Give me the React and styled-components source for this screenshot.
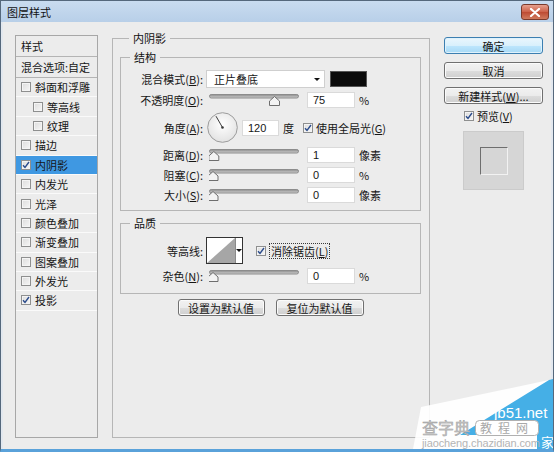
import React from "react";
import styled, { createGlobalStyle } from "styled-components";

const GlobalStyle = createGlobalStyle`
  html, body {
    margin: 0;
    padding: 0;
    background: #ececec;
  }
  body {
    font-family: "Noto Sans CJK SC", "Liberation Sans", sans-serif;
    font-size: 11px;
    color: #161616;
  }
  * {
    box-sizing: border-box;
  }
`;

// 왼쪽 스타일 목록
const styleList = [
  { label: "斜面和浮雕", checked: false },
  { label: "等高线", checked: false, sub: true },
  { label: "纹理", checked: false, sub: true },
  { label: "描边", checked: false },
  { label: "内阴影", checked: true, active: true },
  { label: "内发光", checked: false },
  { label: "光泽", checked: false },
  { label: "颜色叠加", checked: false },
  { label: "渐变叠加", checked: false },
  { label: "图案叠加", checked: false },
  { label: "外发光", checked: false },
  { label: "投影", checked: true },
];

function Check({ checked }) {
  return (
    <CheckBox>
      {checked && (
        <svg width="8" height="8" viewBox="0 0 8 8">
          <path d="M1 4.2 L3 6.5 L7 1" fill="none" stroke="#2b4c8c" strokeWidth="1.4" />
        </svg>
      )}
    </CheckBox>
  );
}

function Key({ k }) {
  return (
    <>
      (<u>{k}</u>)
    </>
  );
}

function Slider({ value }) {
  const x = 4 + (value / 100) * 82;
  return (
    <SliderWrap>
      <svg width="90" height="16" viewBox="0 0 90 16">
        <defs>
          <linearGradient id="track" x1="0" y1="0" x2="0" y2="1">
            <stop offset="0" stopColor="#8a8a8a" />
            <stop offset="1" stopColor="#d2d2d2" />
          </linearGradient>
        </defs>
        <rect x="0.5" y="2.5" width="89" height="3.5" rx="1.7" fill="url(#track)" stroke="#8c8c8c" />
        <path
          d={`M${x - 5} 13.5 L${x + 5} 13.5 L${x + 5} 9 L${x} 4.5 L${x - 5} 9 Z`}
          fill="#f3f3f3"
          stroke="#6e6e6e"
        />
      </svg>
    </SliderWrap>
  );
}

function Dial() {
  return (
    <DialWrap>
      <svg width="31" height="31" viewBox="0 0 31 31">
        <defs>
          <radialGradient id="dialg" cx="0.5" cy="0.4" r="0.6">
            <stop offset="0" stopColor="#ffffff" />
            <stop offset="1" stopColor="#e2e2e2" />
          </radialGradient>
        </defs>
        <circle cx="15.5" cy="15.5" r="14.8" fill="url(#dialg)" stroke="#9c9c9c" />
        <line x1="15.5" y1="15.5" x2="9" y2="4.2" stroke="#3a3a3a" strokeWidth="1" />
        <circle cx="15.5" cy="15.5" r="1.3" fill="#3a3a3a" />
      </svg>
    </DialWrap>
  );
}

function SliderRow({ label, value, unit }) {
  return (
    <Row>
      <Label>{label}</Label>
      <Slider value={value} />
      <NumInput>{value}</NumInput>
      <Unit>{unit}</Unit>
    </Row>
  );
}

export default function App() {
  return (
    <>
      <GlobalStyle />
      <Window>
        <TitleBar>
          <TitleText>图层样式</TitleText>
          <CloseButton>
            <svg width="12" height="9" viewBox="0 0 12 9">
              <path d="M2 1 L10 8 M10 1 L2 8" stroke="#ffffff" strokeWidth="2.2" strokeLinecap="round" />
            </svg>
          </CloseButton>
        </TitleBar>

        <Body>
          <StyleList>
            <ListHeader>样式</ListHeader>
            <ListHeader>混合选项:自定</ListHeader>
            {styleList.map((item) => (
              <ListItem key={item.label} $sub={item.sub} $active={item.active}>
                <Check checked={item.checked} />
                <span>{item.label}</span>
              </ListItem>
            ))}
          </StyleList>

          <Group $main>
            <Legend>内阴影</Legend>

            <Group>
              <Legend>结构</Legend>
              <Rows>
                <Row $h={18}>
                  <Label>
                    混合模式<Key k="B" />:
                  </Label>
                  <Select>
                    <span>正片叠底</span>
                    <Caret />
                  </Select>
                  <Swatch />
                </Row>
                <SliderRow label={<>不透明度<Key k="O" />:</>} value={75} unit="%" />
                <Row $h={31}>
                  <Label>
                    角度<Key k="A" />:
                  </Label>
                  <Dial />
                  <NumInput $w={37} $gap={4}>120</NumInput>
                  <Unit>度</Unit>
                  <CheckLabel $gap={9}>
                    <Check checked />
                    <span>
                      使用全局光<Key k="G" />
                    </span>
                  </CheckLabel>
                </Row>
                <SliderRow label={<>距离<Key k="D" />:</>} value={1} unit="像素" />
                <SliderRow label={<>阻塞<Key k="C" />:</>} value={0} unit="%" />
                <SliderRow label={<>大小<Key k="S" />:</>} value={0} unit="像素" />
              </Rows>
            </Group>

            <Group $quality>
              <Legend>品质</Legend>
              <Rows $quality>
                <Row $h={27}>
                  <Label>等高线:</Label>
                  <ContourBox>
                    <svg width="28" height="25" viewBox="0 0 28 25">
                      <rect width="28" height="25" fill="#ffffff" />
                      <polygon points="0,25 28,0 28,25" fill="#a6a6a6" />
                    </svg>
                    <ContourDrop>
                      <Caret />
                    </ContourDrop>
                  </ContourBox>
                  <CheckLabel $gap={13}>
                    <Check checked />
                    <Focus>
                      消除锯齿<Key k="L" />
                    </Focus>
                  </CheckLabel>
                </Row>
                <SliderRow label={<>杂色<Key k="N" />:</>} value={0} unit="%" />
              </Rows>
            </Group>

            <ButtonRow>
              <Button $w={87}>设置为默认值</Button>
              <Button $w={88}>复位为默认值</Button>
            </ButtonRow>
          </Group>

          <RightColumn>
            <Button $primary>确定</Button>
            <Button>取消</Button>
            <Button>
              新建样式<Key k="W" />...
            </Button>
            <PreviewToggle>
              <Check checked />
              <span>
                预览<Key k="V" />
              </span>
            </PreviewToggle>
            <PreviewBox>
              <PreviewSquare />
            </PreviewBox>
          </RightColumn>
        </Body>

        {/* 워터마크 */}
        <Watermark width="140" height="72" viewBox="0 0 140 72">
          <polygon points="8,30 136,3 140,3 140,72 0,72" fill="#ffffff" opacity="0.92" />
          <polygon points="136,3 140,2 140,72 124,72 124,58 47,58" fill="#45afe6" />
          <text x="81" y="41" fontSize="15" fill="#ffffff" fontFamily="Liberation Sans, sans-serif">
            jb51.net
          </text>
          <text x="9" y="57" fontSize="16" fill="#c4c4c4" stroke="#9a9a9a" strokeWidth="0.4" fontFamily="Noto Sans CJK SC, sans-serif">
            查字典
          </text>
          <rect x="62.5" y="43.5" width="63" height="15" rx="4" fill="#ffffff" stroke="#b0b0b0" />
          <text x="94" y="55.5" fontSize="12" fill="#a8a8a8" textAnchor="middle" letterSpacing="6" fontFamily="Noto Sans CJK SC, sans-serif">
            教程网
          </text>
          <text x="9" y="70" fontSize="11" fill="#b4b4b4" textLength="118" fontFamily="Liberation Sans, sans-serif">
            jiaocheng.chazidian.com
          </text>
          <text x="128" y="70" fontSize="13" fill="#ffffff" fontFamily="Noto Sans CJK SC, sans-serif">
            家
          </text>
        </Watermark>
      </Window>
    </>
  );
}

const Window = styled.div`
  position: relative;
  width: 554px;
  height: 452px;
  display: flex;
  flex-direction: column;
  background: #ececec;
  border: 1px solid #55687c;
  border-bottom: 3px solid #5aa2da;
  overflow: hidden;
`;

const TitleBar = styled.div`
  display: flex;
  align-items: center;
  justify-content: space-between;
  height: 21px;
  padding: 0 4px 0 6px;
  background: linear-gradient(#c9dcf0, #b8cfe8);
`;

const TitleText = styled.span`
  font-size: 11px;
  line-height: 14px;
  color: #111;
`;

const CloseButton = styled.div`
  display: flex;
  align-items: center;
  justify-content: center;
  width: 28px;
  height: 16px;
  margin-top: 1px;
  border: 1px solid #7a3a2c;
  border-radius: 3px;
  background: linear-gradient(#e6a08e, #cc6048 50%, #bd4a32 51%, #d07a5e);
`;

const Body = styled.div`
  flex: 1;
  display: flex;
  align-items: flex-start;
  padding: 9px 0 0 12px;
  border-left: 2px solid #e2e8ef;
  border-right: 2px solid #e2e8ef;
`;

const StyleList = styled.div`
  width: 83px;
  height: 403px;
  margin-top: 4px;
  border: 1px solid #a7a7a7;
  background: #ececec;
  display: flex;
  flex-direction: column;
`;

const ListHeader = styled.div`
  height: 21px;
  padding-left: 5px;
  line-height: 20px;
  border-bottom: 1px solid #b4b4b4;
  white-space: nowrap;
`;

const ListItem = styled.div`
  display: flex;
  align-items: center;
  gap: 4px;
  height: 19.4px;
  padding-left: ${(p) => (p.$sub ? 17 : 5)}px;
  border-bottom: 1px solid #fafafa;
  background: ${(p) => (p.$active ? "#3f98e2" : "transparent")};
  line-height: 14px;
  white-space: nowrap;
`;

const CheckBox = styled.span`
  display: inline-flex;
  align-items: center;
  justify-content: center;
  flex-shrink: 0;
  width: 10px;
  height: 10px;
  border: 1px solid #8e8f8f;
  background: linear-gradient(135deg, #dcdcdc, #f6f6f6);
  box-shadow: inset 0 0 0 1px #f4f4f4;
`;

const Group = styled.fieldset`
  margin: ${(p) => (p.$main ? "0 0 0 14px" : "5px 0 0 0")};
  padding: ${(p) => (p.$main ? "0 8px 0 7px" : "0")};
  width: ${(p) => (p.$main ? "318px" : "301px")};
  height: ${(p) => (p.$main ? "407px" : "auto")};
  min-width: 0;
  border: 1px solid #b6b6b6;
`;

const Legend = styled.legend`
  margin-left: 9px;
  padding: 0 4px;
  font-size: 11px;
  line-height: 14px;
  color: #111;
`;

const Rows = styled.div`
  display: flex;
  flex-direction: column;
  gap: 4px;
  padding: ${(p) => (p.$quality ? "7px 0 9px" : "6px 0 7px")};
`;

const Row = styled.div`
  display: flex;
  align-items: center;
  height: ${(p) => p.$h || 16}px;
  white-space: nowrap;
`;

const Label = styled.span`
  flex-shrink: 0;
  width: 82px;
  margin-right: 3px;
  text-align: right;
  line-height: 14px;
`;

const Select = styled.div`
  display: flex;
  align-items: center;
  justify-content: space-between;
  width: 119px;
  height: 18px;
  padding: 0 4px 0 7px;
  background: #ffffff;
  border: 1px solid #cfcfcf;
  line-height: 14px;
`;

const Caret = styled.span`
  width: 0;
  height: 0;
  border-left: 3px solid transparent;
  border-right: 3px solid transparent;
  border-top: 3px solid #111;
`;

const Swatch = styled.div`
  width: 37px;
  height: 16px;
  margin-left: 5px;
  background: #0b0b0b;
  border: 1px solid #555;
`;

const SliderWrap = styled.div`
  display: flex;
  width: 90px;
  height: 16px;
  margin-left: 3px;
`;

const DialWrap = styled.div`
  display: flex;
  width: 31px;
  height: 31px;
  margin-left: 1px;
`;

const NumInput = styled.div`
  width: ${(p) => p.$w || 48}px;
  height: 16px;
  margin-left: ${(p) => p.$gap || 8}px;
  padding-left: 5px;
  background: #ffffff;
  border: 1px solid #dadada;
  font-family: "Liberation Sans", sans-serif;
  font-size: 11px;
  line-height: 14px;
`;

const Unit = styled.span`
  margin-left: 4px;
  line-height: 14px;
`;

const CheckLabel = styled.div`
  display: flex;
  align-items: center;
  gap: 3px;
  margin-left: ${(p) => p.$gap}px;
  line-height: 14px;
`;

const Focus = styled.span`
  padding: 0 1px;
  border: 1px dotted #3a3a3a;
  line-height: 14px;
`;

const ContourBox = styled.div`
  display: flex;
  width: 37px;
  height: 27px;
  border: 1px solid #333;
  background: #ffffff;
`;

const ContourDrop = styled.div`
  flex: 1;
  display: flex;
  align-items: center;
  justify-content: center;
  border-left: 1px solid #8a8a8a;
`;

const ButtonRow = styled.div`
  display: flex;
  justify-content: center;
  gap: 11px;
  margin-top: 5px;
`;

const Button = styled.div`
  display: flex;
  align-items: center;
  justify-content: center;
  width: ${(p) => (p.$w ? `${p.$w}px` : "100%")};
  height: 17px;
  border: 1px solid ${(p) => (p.$primary ? "#3c7fb1" : "#707070")};
  border-radius: 3px;
  background: ${(p) =>
    p.$primary
      ? "linear-gradient(#eaf6fd, #d9f0fc 50%, #bee6fd 51%, #a7d9f5)"
      : "linear-gradient(#f2f2f2, #ebebeb 50%, #dddddd 51%, #cfcfcf)"};
  box-shadow: inset 0 0 0 1px ${(p) => (p.$primary ? "#dff2fc" : "#fbfbfb")};
  line-height: 14px;
  white-space: nowrap;
`;

const RightColumn = styled.div`
  display: flex;
  flex-direction: column;
  gap: 8px;
  width: 99px;
  margin: 6px 0 0 14px;
`;

const PreviewToggle = styled.div`
  display: flex;
  align-items: center;
  gap: 3px;
  margin: -3px 0 0 20px;
  line-height: 14px;
`;

const PreviewBox = styled.div`
  display: flex;
  align-items: center;
  justify-content: center;
  width: 61px;
  height: 59px;
  margin-left: 19px;
  background: #d6d6d6;
  border: 1px solid #cbcbcb;
`;

const PreviewSquare = styled.div`
  width: 28px;
  height: 28px;
  border: 1px solid #f2f2f2;
  border-top-color: #6e6e6e;
  border-left-color: #6e6e6e;
  background: #d6d6d6;
`;

const Watermark = styled.svg`
  position: absolute;
  right: 0;
  bottom: 0;
`;
